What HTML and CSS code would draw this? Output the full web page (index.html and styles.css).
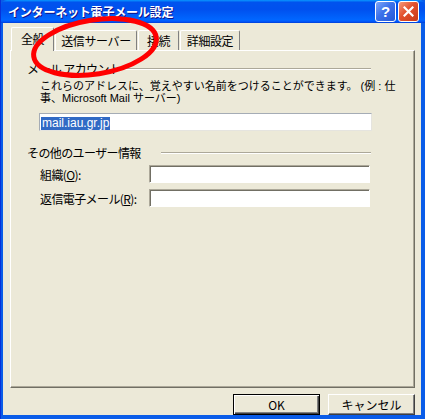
FILE: index.html
```html
<!DOCTYPE html>
<html lang="ja">
<head>
    <meta charset="UTF-8">
    <meta name="viewport" content="width=device-width, initial-scale=1.0">
    <title>インターネット電子メール設定</title>
    <link rel="stylesheet" href="styles.css">
</head>
<body>
    <div class="window">
        <div class="titlebar">
            <span class="title">インターネット電子メール設定</span>
            <div class="controls">
                <div class="ctl help">?</div>
                <div class="ctl close">
                    <svg width="11" height="11" viewBox="0 0 11 11"><path d="M1.5 1.5 L9.5 9.5 M9.5 1.5 L1.5 9.5" stroke="#fff" stroke-width="2.2" stroke-linecap="square"/></svg>
                </div>
            </div>
        </div>

        <div class="content">
            <div class="tabs">
                <div class="tab selected">全般</div>
                <div class="tab t2">送信サーバー</div>
                <div class="tab t3">接続</div>
                <div class="tab t4">詳細設定</div>
            </div>

            <div class="panel">
                <div class="group-head">
                    <span>メール アカウント</span>
                    <div class="rule"></div>
                </div>
                <p class="desc">これらのアドレスに、覚えやすい名前をつけることができます。 (例 : 仕<br>事、Microsoft Mail サーバー)</p>
                <div class="field main"><span class="sel">mail.iau.gr.jp</span></div>

                <div class="group-head second">
                    <span>その他のユーザー情報</span>
                    <div class="rule"></div>
                </div>
                <div class="form-grid">
                    <span class="lbl">組織(<u>O</u>):</span>
                    <div class="field"></div>
                    <span class="lbl">返信電子メール(<u>R</u>):</span>
                    <div class="field"></div>
                </div>
            </div>

            <div class="buttons">
                <div class="btn default">OK</div>
                <div class="btn">キャンセル</div>
            </div>
        </div>

        <!-- hand drawn red circle on top of the screenshot -->
        <svg class="mark" width="425" height="419" viewBox="0 0 425 419">
            <ellipse cx="95" cy="47" rx="62" ry="27" transform="rotate(-9 95 47)" fill="none" stroke="#ff0000" stroke-width="5"/>
        </svg>
    </div>
</body>
</html>
```

FILE: styles.css
```css
body {
    margin: 0;
    font-family: "Liberation Sans", "Noto Sans CJK JP", sans-serif;
    font-size: 12px;
    color: #000;
}
.window {
    position: relative;
    width: 425px;
    height: 419px;
    display: flex;
    flex-direction: column;
    background: #0a5ce8;
    border-left: 1px solid #0831d9;
    box-sizing: border-box;
}
.titlebar {
    height: 28px;
    display: flex;
    align-items: center;
    justify-content: space-between;
    padding: 0 6px 0 7px;
    background: linear-gradient(#0997ff 0, #0053ee 10%, #0050ee 40%, #0066ff 85%, #005bff 92%, #003dd7 100%);
    border-radius: 6px 6px 0 0;
}
.title {
    color: #fff;
    font-weight: bold;
    font-size: 12px;
    line-height: 14px;
    font-family: "Noto Sans CJK JP", sans-serif;
    text-shadow: 1px 1px #0f1089;
    letter-spacing: -0.2px;
}
.controls {
    display: flex;
    gap: 2px;
}
.ctl {
    width: 19px;
    height: 19px;
    border: 1px solid #fff;
    border-radius: 3px;
    display: flex;
    align-items: center;
    justify-content: center;
    color: #fff;
    font-weight: bold;
    font-size: 15px;
    box-sizing: content-box;
}
.help {
    background: linear-gradient(135deg, #7fa6f8 0, #3c72ea 45%, #2458d8 100%);
}
.close {
    background: linear-gradient(135deg, #f59a7a 0, #e2502d 45%, #c83a18 100%);
}
.content {
    flex: 1;
    margin: 0 4px 4px 2px;
    background: #ece9d8;
    padding: 5px 6px 0 7px;
    display: flex;
    flex-direction: column;
}
.tabs {
    display: flex;
    align-items: flex-end;
    height: 22px;
    padding-left: 1px;
    position: relative;
    z-index: 1;
}
.tab {
    height: 19px;
    line-height: 19px;
    text-align: center;
    border-top: 1px solid #fff;
    border-left: 1px solid #fff;
    border-right: 1px solid #808080;
    border-radius: 2px 2px 0 0;
    box-sizing: content-box;
    font-family: "Noto Sans CJK JP", sans-serif;
    letter-spacing: -0.4px;
    background: #ece9d8;
    margin-left: 1px;
}
.tab.selected {
    width: 41px;
    height: 23px;
    line-height: 21px;
    margin: 0 0 -1px 0;
}
.t2 { width: 80px; }
.t3 { width: 39px; }
.t4 { width: 58px; }
.panel {
    height: 325px;
    border-top: 1px solid #fff;
    border-left: 1px solid #fff;
    border-right: 1px solid #716f64;
    border-bottom: 1px solid #716f64;
    box-shadow: inset -1px -1px #aca899;
    padding: 11px 43px 0 16px;
}
.group-head {
    display: flex;
    align-items: center;
    height: 13px;
    font-family: "Noto Sans CJK JP", sans-serif;
    letter-spacing: -0.6px;
}
.group-head.second {
    margin-top: 15px;
}
.group-head .rule {
    flex: 1;
    margin-left: 4px;
    border-top: 1px solid #aca899;
    border-bottom: 1px solid #fff;
}
.second .rule {
    margin-left: 20px;
}
.desc {
    margin: 5px 0 0 13px;
    font-size: 11px;
    line-height: 12px;
    white-space: nowrap;
}
.field {
    height: 18px;
    box-sizing: border-box;
    background: #fff;
    border-top: 1px solid #aca899;
    border-left: 1px solid #aca899;
    border-right: 1px solid #fff;
    border-bottom: 1px solid #fff;
    box-shadow: inset 1px 1px #716f64;
}
.field.main {
    margin: 9px 0 0 12px;
    width: 333px;
    box-shadow: none;
    border-color: #a5acb5 #e5e4df #e5e4df #a5acb5;
    padding: 2px 0 0 1px;
}
.sel {
    display: inline-block;
    background: #316ac5;
    color: #fff;
    height: 13px;
    line-height: 13px;
    padding: 0 1px;
}
.form-grid {
    margin: 6px 0 0 13px;
    display: grid;
    grid-template-columns: 109px 221px;
    row-gap: 6px;
    align-items: center;
}
.lbl {
    font-family: "Noto Sans CJK JP", sans-serif;
    letter-spacing: -0.6px;
}
.buttons {
    display: flex;
    justify-content: flex-end;
    gap: 8px;
    padding-top: 6px;
}
.btn {
    width: 87px;
    height: 21px;
    box-sizing: border-box;
    display: flex;
    align-items: center;
    justify-content: center;
    border-top: 1px solid #fff;
    border-left: 1px solid #fff;
    border-right: 1px solid #404040;
    border-bottom: 1px solid #404040;
    box-shadow: inset -1px -1px #808080;
    font-family: "Noto Sans CJK JP", sans-serif;
}
.btn.default {
    border: 1px solid #000;
    box-shadow: inset 1px 1px #fff, inset -1px -1px #404040, inset -2px -2px #808080;
}
.mark {
    position: absolute;
    left: -1px;
    top: 0;
    z-index: 5;
    pointer-events: none;
}
```
